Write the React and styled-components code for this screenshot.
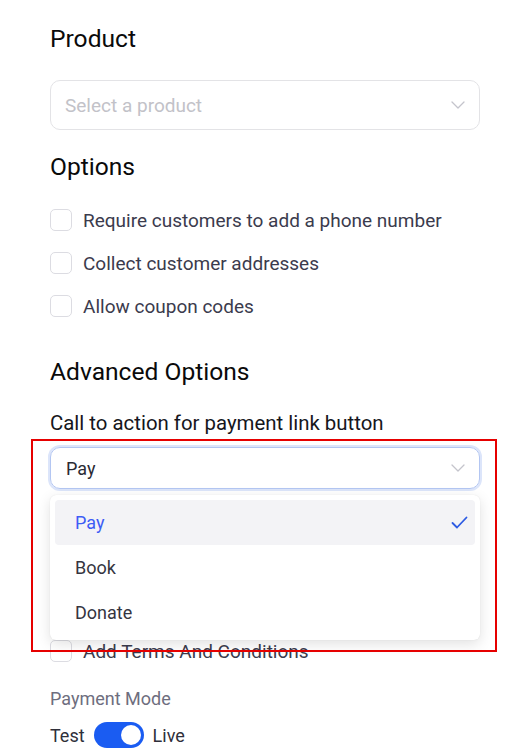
import React from "react";
import styled, { createGlobalStyle } from "styled-components";

const GlobalStyle = createGlobalStyle`
  * { box-sizing: border-box; }
  body {
    margin: 0;
    background: #ffffff;
    font-family: Roboto, "Liberation Sans", Arial, sans-serif;
  }
`;

const Page = styled.div`
  position: relative;
  padding: 25px 51px 0 50px;
  width: 531px;
  min-height: 756px;
`;

const Heading = styled.h2`
  margin: ${(p) => p.$top || 0}px 0 ${(p) => p.$gap || 0}px;
  font-size: 24.6px;
  line-height: 28px;
  font-weight: 400;
  color: #0a0a0a;
`;

const SelectBox = styled.div`
  display: flex;
  align-items: center;
  justify-content: space-between;
  height: ${(p) => (p.$focused ? 42 : 50)}px;
  padding: 0 14px 0 ${(p) => (p.$focused ? 15 : 14)}px;
  border: 1px solid ${(p) => (p.$focused ? "#b3c6f2" : "#e3e3e6")};
  border-radius: 10px;
  box-shadow: ${(p) => (p.$focused ? "0 0 0 2px #dce5fa" : "none")};
  font-size: ${(p) => (p.$placeholder ? 19 : 18)}px;
  color: ${(p) => (p.$placeholder ? "#c2c2c8" : "#2a2a33")};
  margin: ${(p) => p.$margin || 0};
`;

const Chevron = () => (
  <svg width="14" height="8" viewBox="0 0 14 8" fill="none">
    <path d="M1 1l6 6 6-6" stroke="#c4c4cc" strokeWidth="1.3" strokeLinecap="round" strokeLinejoin="round" />
  </svg>
);

const CheckList = styled.div`
  display: flex;
  flex-direction: column;
  gap: 21px;
  margin: ${(p) => p.$margin || 0};
`;

const CheckRow = styled.label`
  display: flex;
  align-items: center;
  gap: 11px;
  height: 22px;
  font-size: 19px;
  color: #3b3b4d;
`;

const Box = styled.span`
  width: 22px;
  height: 22px;
  border: 1px solid #dcdce2;
  border-radius: 5px;
  background: #fff;
  flex: none;
`;

const FieldLabel = styled.div`
  font-size: 20.4px;
  line-height: 24px;
  color: #16161c;
  margin: 25px 0 12px;
`;

const SelectWrap = styled.div`
  position: relative;
`;

const Menu = styled.div`
  position: absolute;
  left: 0;
  right: 0;
  top: 48px;
  padding: 5px;
  background: #fff;
  border-radius: 6px;
  box-shadow: 0 4px 14px rgba(0, 0, 0, 0.12), 0 0 1px rgba(0, 0, 0, 0.12);
  z-index: 2;
`;

const MenuItem = styled.div`
  display: flex;
  align-items: center;
  justify-content: space-between;
  height: 45px;
  padding: 0 7px 0 20px;
  border-radius: 4px;
  font-size: 18px;
  background: ${(p) => (p.$active ? "#f3f3f6" : "transparent")};
  color: ${(p) => (p.$active ? "#3d5cf5" : "#35353f")};
`;

const Check = () => (
  <svg width="17" height="13" viewBox="0 0 17 13" fill="none">
    <path d="M1.5 7l4.5 4.5L15.5 1.5" stroke="#2d5be3" strokeWidth="1.8" strokeLinecap="round" strokeLinejoin="round" />
  </svg>
);

const SmallLabel = styled.div`
  font-size: 18px;
  line-height: 22px;
  color: #6e6e7e;
  margin: 26px 0 12px;
`;

const ToggleRow = styled.div`
  display: flex;
  align-items: center;
  gap: 9px;
  font-size: 18px;
  color: #2f2f3a;
`;

const Switch = styled.span`
  position: relative;
  width: 50px;
  height: 26px;
  border-radius: 13px;
  background: #1a5cf2;
  &::after {
    content: "";
    position: absolute;
    top: 3px;
    right: 3px;
    width: 20px;
    height: 20px;
    border-radius: 50%;
    background: #fff;
  }
`;

const Highlight = styled.div`
  position: absolute;
  left: 31px;
  top: 439px;
  width: 466px;
  height: 213px;
  border: 2px solid #e60000;
  pointer-events: none;
  z-index: 3;
`;

const options = ["Require customers to add a phone number", "Collect customer addresses", "Allow coupon codes"];

export default function App() {
  return (
    <>
      <GlobalStyle />
      <Page>
        <Heading $gap={27}>Product</Heading>
        <SelectBox $placeholder $margin="0 0 23px">
          <span>Select a product</span>
          <Chevron />
        </SelectBox>
        <Heading>Options</Heading>
        <CheckList $margin="28px 0 0">
          {options.map((o) => (
            <CheckRow key={o}>
              <Box />
              {o}
            </CheckRow>
          ))}
        </CheckList>
        <Heading $top={41}>Advanced Options</Heading>
        <FieldLabel>Call to action for payment link button</FieldLabel>
        <SelectWrap>
          <SelectBox $focused>
            <span>Pay</span>
            <Chevron />
          </SelectBox>
          <Menu>
            <MenuItem $active>
              <span>Pay</span>
              <Check />
            </MenuItem>
            <MenuItem>Book</MenuItem>
            <MenuItem>Donate</MenuItem>
          </Menu>
        </SelectWrap>
        <CheckList $margin="151px 0 0">
          <CheckRow>
            <Box />
            Add Terms And Conditions
          </CheckRow>
        </CheckList>
        <SmallLabel>Payment Mode</SmallLabel>
        <ToggleRow>
          <span>Test</span>
          <Switch />
          <span>Live</span>
        </ToggleRow>
        <Highlight />
      </Page>
    </>
  );
}
